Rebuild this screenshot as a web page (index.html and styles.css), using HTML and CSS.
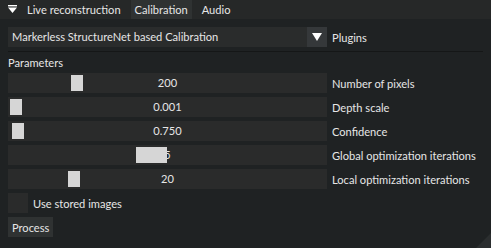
FILE: index.html
```html
<!DOCTYPE html>
<html lang="en">
<head>
  <meta charset="UTF-8">
  <title>Calibration</title>
  <link rel="stylesheet" href="styles.css">
</head>
<body>
  <div class="window">
    <div class="titlebar">
      <svg class="collapse" width="9" height="9" viewBox="0 0 9 9">
        <rect x="0" y="0" width="9" height="1.4" fill="#ffffff"/>
        <polygon points="0,2.5 9,2.5 4.5,8" fill="#ffffff"/>
      </svg>
      <span class="tab">Live reconstruction</span>
      <span class="tab active">Calibration</span>
      <span class="tab">Audio</span>
    </div>
    <div class="content">
      <div class="row">
        <div class="combo">Markerless StructureNet based Calibration</div>
        <div class="combo-btn">
          <svg width="10" height="9" viewBox="0 0 10 9"><polygon points="0,0 10,0 5,8" fill="#ffffff"/></svg>
        </div>
        <span class="label">Plugins</span>
      </div>
      <div class="separator"></div>
      <div class="heading">Parameters</div>
      <div class="row">
        <div class="slider"><span class="value">200</span><span class="grab" style="left: 63px"></span></div>
        <span class="label">Number of pixels</span>
      </div>
      <div class="row">
        <div class="slider"><span class="value">0.001</span><span class="grab" style="left: 2px"></span></div>
        <span class="label">Depth scale</span>
      </div>
      <div class="row">
        <div class="slider"><span class="value">0.750</span><span class="grab" style="left: 4px"></span></div>
        <span class="label">Confidence</span>
      </div>
      <div class="row">
        <div class="slider"><span class="value">5</span><span class="grab wide" style="left: 128px"></span></div>
        <span class="label">Global optimization iterations</span>
      </div>
      <div class="row">
        <div class="slider"><span class="value">20</span><span class="grab" style="left: 60px"></span></div>
        <span class="label">Local optimization iterations</span>
      </div>
      <div class="row">
        <div class="checkbox"></div>
        <span class="label">Use stored images</span>
      </div>
      <div class="row">
        <button class="button">Process</button>
      </div>
    </div>
    <div class="grip"></div>
  </div>
</body>
</html>
```

FILE: styles.css
```css
body {
  margin: 0;
  padding: 0;
  background-color: #1f2223;
  font-family: Lato, "Open Sans", sans-serif;
  font-size: 11.1px;
  color: #e6e6e6;
}
.window {
  position: relative;
  width: 491px;
  height: 248px;
  overflow: hidden;
  background-color: #1f2223;
}
.titlebar {
  height: 19px;
  display: flex;
  align-items: center;
  background-color: #262828;
}
.collapse {
  margin-left: 8px;
  margin-right: 6px;
  flex-shrink: 0;
}
.tab {
  height: 19px;
  line-height: 19px;
  padding: 0 4px;
  margin-right: 6px;
}
.tab.active {
  background-color: #2f3232;
}
.content {
  padding: 8px 8px 0 8px;
  display: flex;
  flex-direction: column;
  gap: 4px;
}
.row {
  display: flex;
  align-items: center;
  height: 20px;
}
.combo {
  width: 295px;
  flex-shrink: 0;
  height: 20px;
  line-height: 20px;
  padding-left: 4px;
  background-color: #2a2c2c;
}
.combo-btn {
  width: 20px;
  height: 20px;
  flex-shrink: 0;
  display: flex;
  align-items: center;
  justify-content: center;
  background-color: #35383a;
}
.label {
  margin-left: 5px;
  white-space: nowrap;
}
.separator {
  height: 1px;
  width: 475px;
  background-color: #151717;
}
.heading {
  height: 13px;
  line-height: 13px;
}
.slider {
  position: relative;
  width: 319px;
  flex-shrink: 0;
  height: 20px;
  line-height: 20px;
  text-align: center;
  background-color: #2a2b2b;
}
.grab {
  position: absolute;
  top: 2px;
  width: 12px;
  height: 16px;
  background-color: #d6d6d6;
}
.grab.wide {
  width: 31px;
}
.checkbox {
  width: 20px;
  height: 20px;
  flex-shrink: 0;
  background-color: #2a2b2b;
}
.button {
  height: 20px;
  padding: 0 4px;
  border: none;
  font-family: inherit;
  font-size: 11.1px;
  color: #e6e6e6;
  background-color: #2f3232;
}
.grip {
  position: absolute;
  right: 0;
  bottom: 0;
  width: 0;
  height: 0;
  border-left: 15px solid transparent;
  border-bottom: 15px solid #2b2e2f;
}
```
